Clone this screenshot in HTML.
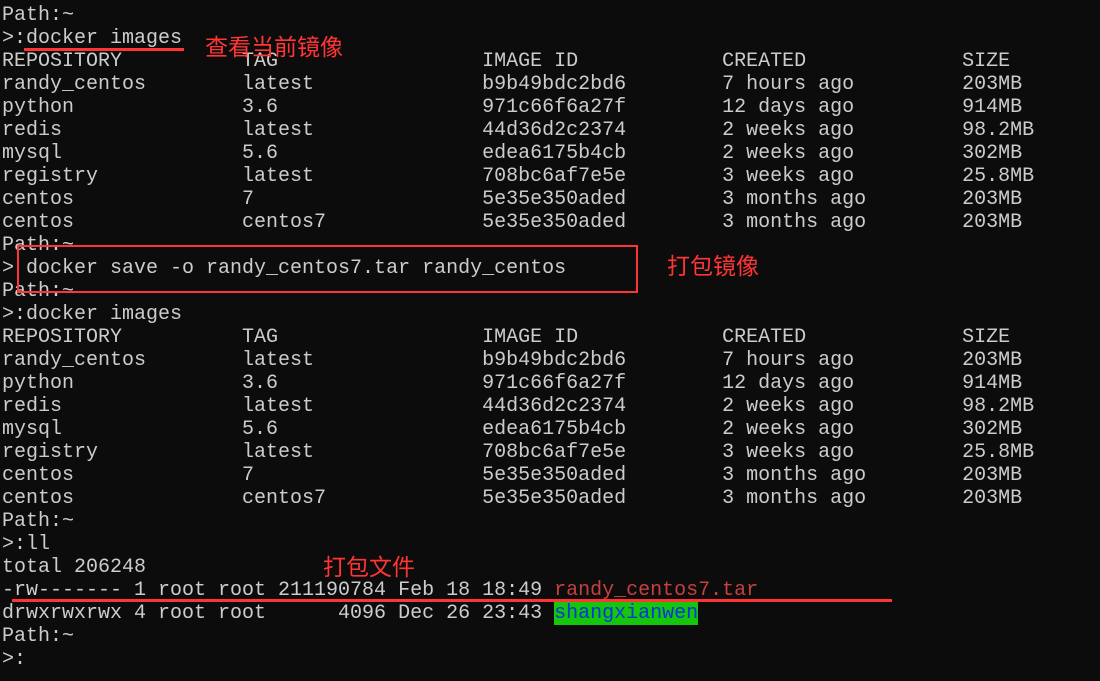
<!DOCTYPE html>
<html><head><meta charset="utf-8"><style>
html,body{margin:0;padding:0;background:#0c0c0c;width:1100px;height:681px;overflow:hidden;position:relative}
pre{margin:0;padding-top:4px;padding-left:2px;font-family:"Liberation Mono","Noto Sans CJK SC",monospace;font-size:20px;line-height:23px;color:#cccccc;white-space:pre}
.r{color:#c5403f}.g{background:#16c60c;color:#0037da}
.a{position:absolute;background:#ff3535}
.t{position:absolute;color:#ff3535;font-family:"Noto Sans CJK SC",sans-serif;font-size:23px;line-height:26px}
.box{position:absolute;border:2px solid #ff3535}
</style></head><body>
<pre>Path:~
&gt;:docker images
REPOSITORY          TAG                 IMAGE ID            CREATED             SIZE
randy_centos        latest              b9b49bdc2bd6        7 hours ago         203MB
python              3.6                 971c66f6a27f        12 days ago         914MB
redis               latest              44d36d2c2374        2 weeks ago         98.2MB
mysql               5.6                 edea6175b4cb        2 weeks ago         302MB
registry            latest              708bc6af7e5e        3 weeks ago         25.8MB
centos              7                   5e35e350aded        3 months ago        203MB
centos              centos7             5e35e350aded        3 months ago        203MB
Path:~
&gt; docker save -o randy_centos7.tar randy_centos
Path:~
&gt;:docker images
REPOSITORY          TAG                 IMAGE ID            CREATED             SIZE
randy_centos        latest              b9b49bdc2bd6        7 hours ago         203MB
python              3.6                 971c66f6a27f        12 days ago         914MB
redis               latest              44d36d2c2374        2 weeks ago         98.2MB
mysql               5.6                 edea6175b4cb        2 weeks ago         302MB
registry            latest              708bc6af7e5e        3 weeks ago         25.8MB
centos              7                   5e35e350aded        3 months ago        203MB
centos              centos7             5e35e350aded        3 months ago        203MB
Path:~
&gt;:ll
total 206248
-rw------- 1 root root 211190784 Feb 18 18:49 <span class="r">randy_centos7.tar</span>
drwxrwxrwx 4 root root      4096 Dec 26 23:43 <span class="g">shangxianwen</span>
Path:~
&gt;:</pre>
<div class="a" style="left:24px;top:48px;width:160px;height:3px"></div>
<div class="t" style="left:205px;top:32px">查看当前镜像</div>
<div class="box" style="left:17px;top:245px;width:617px;height:44px"></div>
<div class="t" style="left:667px;top:251px">打包镜像</div>
<div class="t" style="left:323px;top:552px">打包文件</div>
<div class="a" style="left:12px;top:599px;width:880px;height:3px"></div>
</body></html>
